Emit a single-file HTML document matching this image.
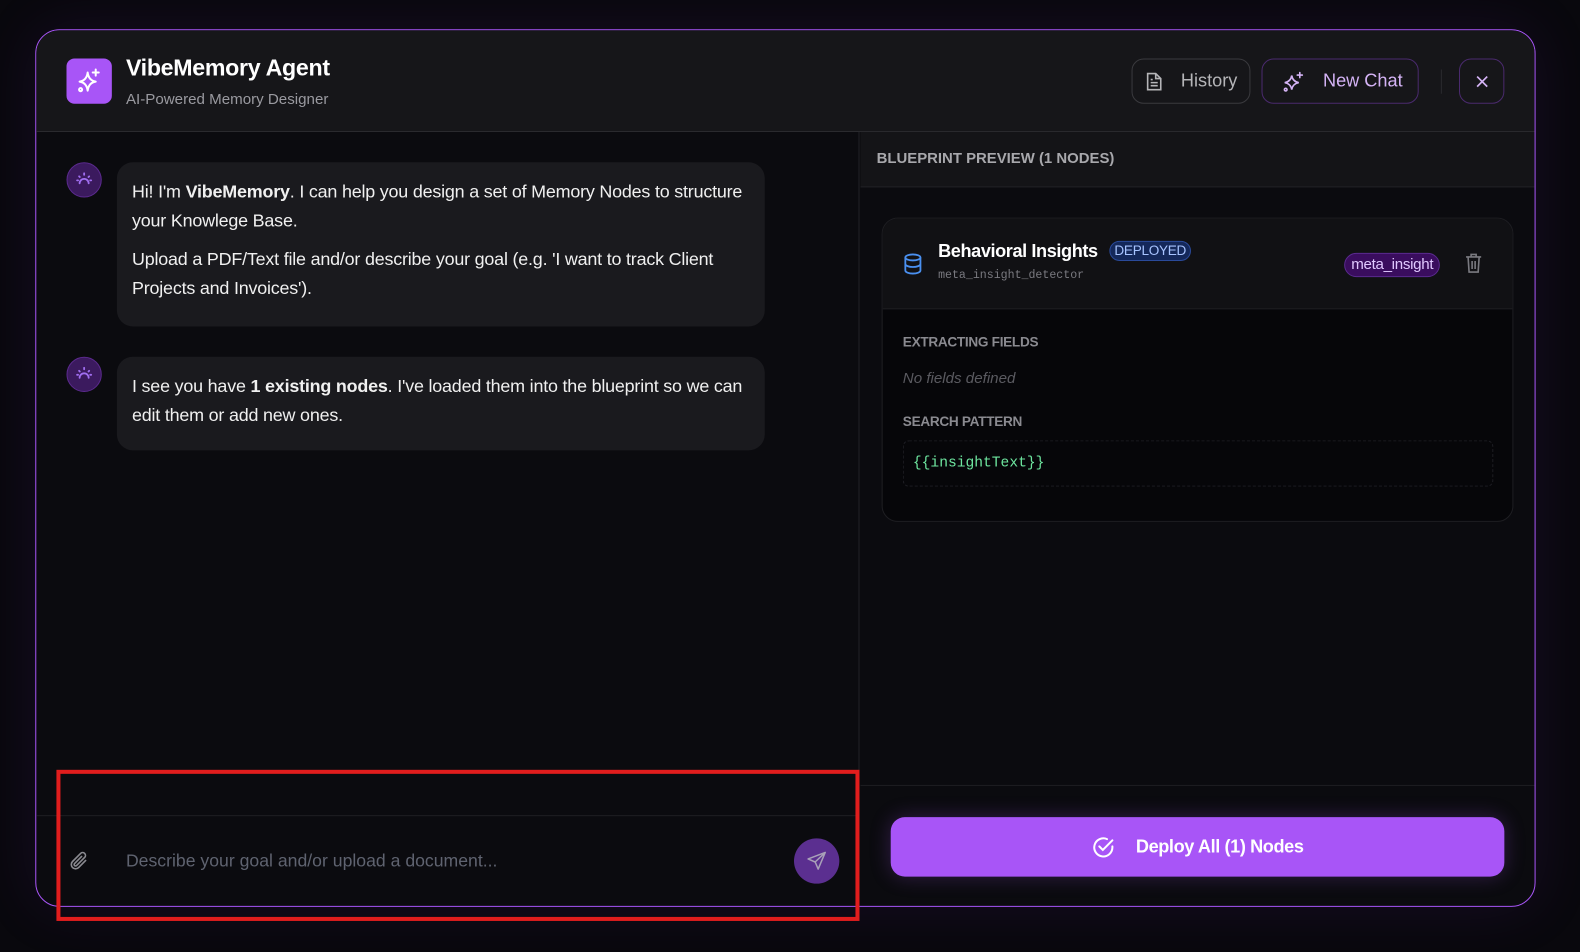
<!DOCTYPE html>
<html><head><meta charset="utf-8"><style>
*{box-sizing:border-box;margin:0;padding:0}
body{width:1580px;height:945px;background:#09080d;font-family:"Liberation Sans",sans-serif;position:relative;overflow:hidden;color:#e5e5e5}
#w{position:absolute;left:0;top:0;width:1580px;height:945px;transform:scale(1.0076);transform-origin:0 0}
.modal{position:absolute;left:35px;top:29px;width:1489px;height:871px;border:1px solid #a855f7;border-radius:24px;background:#0b0b0f;overflow:hidden;box-shadow:0 0 60px rgba(120,50,200,.12)}
.hdr{position:absolute;left:0;top:0;right:0;height:101px;background:#161619;border-bottom:1px solid #2a2a2e}
.logo{position:absolute;left:30px;top:28px;width:45px;height:45px;border-radius:8px;background:#a855f7}
.title{position:absolute;left:89px;top:24px;font-size:23px;font-weight:bold;color:#fff;letter-spacing:-.3px}
.sub{position:absolute;left:89px;top:60px;font-size:15px;color:#9a9aa0}
.btn{position:absolute;top:28px;height:45px;border-radius:12px;font-size:18px;display:flex;align-items:center}
.left{position:absolute;left:0;top:101px;width:817px;bottom:0;border-right:1px solid #222226}
.av{position:absolute;left:30px;width:35px;height:35px;border-radius:50%;background:#3b1a5e;border:1px solid #5b2a8e}
.bub{position:absolute;left:80px;width:643px;background:#1a1a1e;border-radius:16px;padding:15px 15px 23px;font-size:17.8px;line-height:29px;color:#f0f0f0;letter-spacing:-.2px}
.right{position:absolute;left:818px;top:101px;right:0;bottom:0}
</style></head><body>
<div id="w">
<div class="modal">
 <div class="hdr">
  <div class="logo"><svg width="45" height="45" viewBox="0 0 45 45" fill="none" stroke="#fff" stroke-width="2" stroke-linecap="round" stroke-linejoin="round"><path d="M21 14 Q22 22 29 23 Q22 24 21 32 Q20 24 13 23 Q20 22 21 14Z"/><path d="M29 11v6M26 14h6"/><circle cx="14" cy="31" r="1.5"/></svg></div>
  <div class="title">VibeMemory Agent</div>
  <div class="sub">AI-Powered Memory Designer</div>
  <div class="btn" style="left:1087px;width:118px;border:1px solid #3a3a3e;color:#b5b5b8"><svg style="margin:0 18px 0 13px" width="17" height="20" viewBox="0 0 17 20" fill="none" stroke="#b5b5b8" stroke-width="1.6"><path d="M2 2h8l5 5v11H2z"/><path d="M10 2v5h5M5 11h7M5 14h7M5 8h2"/></svg>History</div>
  <div class="btn" style="left:1216px;width:156px;border:1px solid #4a2a6e;color:#d4b3f5"><svg style="margin:0 18px 0 20px" width="22" height="22" viewBox="0 0 22 22" fill="none" stroke="#d4b3f5" stroke-width="1.6" stroke-linecap="round"><path d="M9 5 Q10 11 16 12 Q10 13 9 19 Q8 13 2 12 Q8 11 9 5Z"/><path d="M17 2v5M14.5 4.5h5"/><circle cx="3" cy="19" r="1.3"/></svg>New Chat</div>
  <div style="position:absolute;left:1394px;top:39px;width:1px;height:24px;background:#2a2a2e"></div>
  <div class="btn" style="left:1412px;width:45px;border:1px solid #4a2a6e;justify-content:center"><svg width="14" height="14" viewBox="0 0 14 14" stroke="#d4b3f5" stroke-width="1.7"><path d="M2 2l10 10M12 2L2 12"/></svg></div>
 </div>
 <div class="left">
  <div class="av" style="top:30px"></div>
  <svg style="position:absolute;left:37px;top:37px" width="21" height="21" viewBox="0 0 21 21" fill="none" stroke="#a06ef0" stroke-width="1.8" stroke-linecap="round"><path d="M6 14a4.5 4.5 0 0 1 9 0M10.5 4v1.5M3.5 11h1M16.5 11h1M5.5 7l.7.7M15.5 7l-.7.7"/></svg>
  <div class="bub" style="top:30px">Hi! I'm <b>VibeMemory</b>. I can help you design a set of Memory Nodes to structure your Knowlege Base.<div style="height:9px"></div>Upload a PDF/Text file and/or describe your goal (e.g. 'I want to track Client Projects and Invoices').</div>
  <div class="av" style="top:223px"></div>
  <svg style="position:absolute;left:37px;top:230px" width="21" height="21" viewBox="0 0 21 21" fill="none" stroke="#a06ef0" stroke-width="1.8" stroke-linecap="round"><path d="M6 14a4.5 4.5 0 0 1 9 0M10.5 4v1.5M3.5 11h1M16.5 11h1M5.5 7l.7.7M15.5 7l-.7.7"/></svg>
  <div class="bub" style="top:223px;padding-bottom:20px">I see you have <b>1 existing nodes</b>. I've loaded them into the blueprint so we can edit them or add new ones.</div>
  <div style="position:absolute;left:0;right:0;top:678px;height:1px;background:#1e1e22"></div>
  <svg style="position:absolute;left:33px;top:713px" width="20" height="22" viewBox="0 0 20 22" fill="none" stroke="#8a8a90" stroke-width="1.6" stroke-linecap="round"><path d="M16 10l-7 7a4 4 0 0 1-6-6l8-8a2.7 2.7 0 0 1 4 4l-8 8a1.3 1.3 0 0 1-2-2l7-7"/></svg>
  <div style="position:absolute;left:89px;top:713px;font-size:17.5px;color:#5f6370">Describe your goal and/or upload a document...</div>
  <div style="position:absolute;left:752px;top:701px;width:45px;height:45px;border-radius:50%;background:#5b2f90"><svg style="margin:12px 0 0 12px" width="21" height="21" viewBox="0 0 21 21" fill="none" stroke="#a8a0b8" stroke-width="1.5" stroke-linejoin="round"><path d="M19 2L2 8.5l7 3 3 7z M19 2L9 11.5"/></svg></div>
 </div>
 <div class="right">
  <div style="position:absolute;left:0;right:0;top:0;height:55px;background:#141417;border-bottom:1px solid #222226;font-size:14.8px;font-weight:bold;color:#a8a8ac;padding:19px 0 0 16px">BLUEPRINT PREVIEW (1 NODES)</div>
  <div style="position:absolute;left:21px;top:85px;width:627px;height:302px;border:1px solid #1e1e22;border-radius:16px;background:#060609;overflow:hidden">
   <div style="height:90px;background:#111114;border-bottom:1px solid #1e1e22;position:relative">
    <svg style="position:absolute;left:20px;top:34px" width="20" height="22" viewBox="0 0 20 22" fill="none" stroke="#4a90f0" stroke-width="1.8"><ellipse cx="10" cy="4.5" rx="7.5" ry="3"/><path d="M2.5 4.5v13c0 1.7 3.4 3 7.5 3s7.5-1.3 7.5-3v-13M2.5 11c0 1.7 3.4 3 7.5 3s7.5-1.3 7.5-3"/></svg>
    <div style="position:absolute;left:55px;top:22px;font-size:18px;font-weight:bold;color:#fff;letter-spacing:-.4px">Behavioral Insights</div>
    <div style="position:absolute;left:225px;top:22px;height:20px;padding:0 4px;border:1px solid #2a4a9a;background:#14285a;color:#a8c4ff;border-radius:10px;font-size:13.5px;line-height:18px;letter-spacing:-.3px">DEPLOYED</div>
    <div style="position:absolute;left:55px;top:50px;font-family:'Liberation Mono',monospace;font-size:11.5px;color:#7a7a80">meta_insight_detector</div>
    <div style="position:absolute;left:458px;top:34px;height:24px;padding:0 6px;border:1px solid #5a2a8e;background:#3a0d5e;color:#e0c8ff;border-radius:12px;font-size:15px;line-height:22px;letter-spacing:-.3px">meta_insight</div>
    <svg style="position:absolute;left:578px;top:34px" width="17" height="20" viewBox="0 0 17 20" fill="none" stroke="#7a7a80" stroke-width="1.6"><path d="M1 4h15M6 4V1.5h5V4M3 4l1 15h9l1-15M7 8v8M10 8v8"/></svg>
   </div>
   <div style="position:absolute;left:20px;top:115px;font-size:13.5px;font-weight:bold;color:#8a8a90;letter-spacing:-.3px">EXTRACTING FIELDS</div>
   <div style="position:absolute;left:20px;top:150px;font-size:15px;font-style:italic;color:#5a5a60">No fields defined</div>
   <div style="position:absolute;left:20px;top:194px;font-size:13.5px;font-weight:bold;color:#8a8a90;letter-spacing:-.3px">SEARCH PATTERN</div>
   <div style="position:absolute;left:20px;top:220px;width:586px;height:46px;border:1px dashed #1e1e24;border-radius:6px;font-family:'Liberation Mono',monospace;font-size:14.5px;color:#6ee7a0;padding:14px 0 0 9px">{{insightText}}</div>
  </div>
  <div style="position:absolute;left:0;right:0;top:648px;height:1px;background:#1e1e22"></div>
  <div style="position:absolute;left:30px;top:680px;width:609px;height:59px;border-radius:14px;background:#a855f7;box-shadow:0 0 20px rgba(168,85,247,.25);display:flex;align-items:center;justify-content:center;font-size:18px;font-weight:bold;color:#fff;letter-spacing:-.4px"><svg style="margin-right:20px" width="24" height="24" viewBox="0 0 24 24" fill="none" stroke="#fff" stroke-width="2" stroke-linecap="round"><path d="M21 11v1a9 9 0 1 1-5.3-8.2"/><path d="M8 11l3.5 3.5L21 5"/></svg>Deploy All (1) Nodes</div>
 </div>
</div>
<div style="position:absolute;left:56px;top:764px;width:797px;height:150px;border:4px solid #e11d1d"></div>
</div>
</body></html>
